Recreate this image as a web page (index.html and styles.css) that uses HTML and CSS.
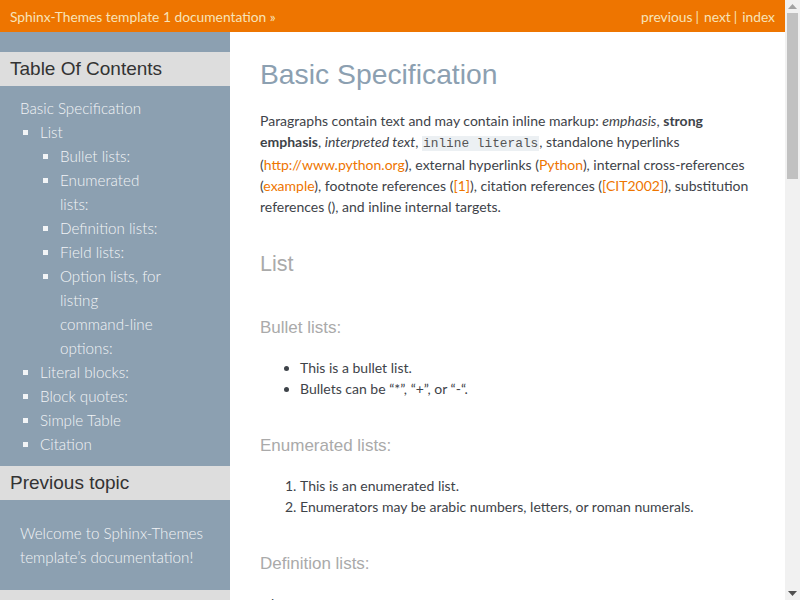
FILE: index.html
```html
<!DOCTYPE html>
<html>
<head>
<meta charset="utf-8">
<title>Basic Specification</title>
<link rel="stylesheet" href="styles.css">
</head>
<body>
<div class="viewport">
<div class="page">
<div class="topbar">
  <a class="brand" href="#">Sphinx-Themes template 1 documentation</a><span class="raquo"> »</span>
  <nav class="rel">
    <a href="#">previous</a><span class="sep">|</span>
    <a href="#">next</a><span class="sep">|</span>
    <a href="#">index</a>
  </nav>
</div>
<div class="layout">
  <aside class="sidebar">
    <h3 class="side-title">Table Of Contents</h3>
    <div class="side-body">
      <a class="toc-root" href="#">Basic Specification</a>
      <ul class="toc">
        <li><a href="#">List</a>
          <ul class="toc">
            <li><a href="#">Bullet lists:</a></li>
            <li><a href="#">Enumerated lists:</a></li>
            <li><a href="#">Definition lists:</a></li>
            <li><a href="#">Field lists:</a></li>
            <li><a href="#">Option lists, for listing command-line options:</a></li>
          </ul>
        </li>
        <li><a href="#">Literal blocks:</a></li>
        <li><a href="#">Block quotes:</a></li>
        <li><a href="#">Simple Table</a></li>
        <li><a href="#">Citation</a></li>
      </ul>
    </div>
    <h3 class="side-title">Previous topic</h3>
    <p class="side-text"><a href="#">Welcome to Sphinx-Themes template’s documentation!</a></p>
    <h3 class="side-title">Next topic</h3>
    <p class="side-text"><a href="#">Another page</a></p>
    <h3 class="side-title">This Page</h3>
    <ul class="toc side-list"><li><a href="#">Show Source</a></li></ul>
  </aside>
  <main class="main">
    <h1>Basic Specification</h1>
    <p>Paragraphs contain text and may contain inline markup: <em>emphasis</em>, <strong>strong emphasis</strong>, <em>interpreted text</em>, <code>inline literals</code>, standalone hyperlinks (<a href="#">http://www.python.org</a>), external hyperlinks (<a href="#">Python</a>), internal cross-references (<a href="#">example</a>), footnote references (<a href="#">[1]</a>), citation references (<a href="#">[CIT2002]</a>), substitution references (), and inline internal targets.</p>

    <h2>List</h2>
    <h3>Bullet lists:</h3>
    <ul class="bullets">
      <li>This is a bullet list.</li>
      <li>Bullets can be “*”, “+”, or “-“.</li>
    </ul>
    <h3>Enumerated lists:</h3>
    <ol class="numbers">
      <li>This is an enumerated list.</li>
      <li>Enumerators may be arabic numbers, letters, or roman numerals.</li>
    </ol>
    <h3>Definition lists:</h3>
    <dl>
      <dt>what</dt>
      <dd>Definition lists associate a term with a definition.</dd>
      <dt>how</dt>
      <dd>The term is a one-line phrase, and the definition is one or more paragraphs or body elements, indented relative to the term.</dd>
    </dl>
    <h3>Field lists:</h3>
    <dl>
      <dt>what</dt>
      <dd>Field lists map field names to field bodies, like database records.</dd>
      <dt>how</dt>
      <dd>The field marker is a colon, the field name, and a colon.</dd>
    </dl>
    <h3>Option lists, for listing command-line options:</h3>
    <dl>
      <dt><code>-a</code></dt><dd>command-line option “a”</dd>
      <dt><code>-b file</code></dt><dd>options can have arguments and long descriptions</dd>
      <dt><code>--long</code></dt><dd>options can be long also</dd>
      <dt><code>--input=file</code></dt><dd>long options can also have arguments</dd>
    </dl>
    <h2>Literal blocks:</h2>
    <p>Literal blocks are indented, and indicated with a double-colon ::</p>
    <pre>for a in [5,4,3,2,1]:   # this is program code, shown as-is
    print a
print "it's..."
# a literal block continues until the indentation ends</pre>
    <h2>Block quotes:</h2>
    <blockquote>Block quotes consist of indented body elements: This theory, that is mine, is mine.</blockquote>
    <h2>Simple Table</h2>
    <p>A simple table with headers, rows and a caption.</p>
    <h2>Citation</h2>
    <p>[CIT2002] A citation (as often used in journals).</p>
    <p>[1] A footnote contains body elements, consistently indented by at least 3 spaces.</p>
  </main>
</div>
</div>
<div class="scrollbar" aria-hidden="true">
  <div class="sb-btn"><svg width="9" height="5" viewBox="0 0 9 5"><path d="M0 5 L4.5 0 L9 5 Z" fill="#a3a3a3"/></svg></div>
  <div class="sb-track"><div class="sb-thumb"></div></div>
  <div class="sb-btn"><svg width="9" height="5" viewBox="0 0 9 5"><path d="M0 0 L9 0 L4.5 5 Z" fill="#505050"/></svg></div>
</div>
</div>
</body>
</html>
```
FILE: styles.css
```css
html, body {
  margin: 0;
  padding: 0;
}
body {
  font-family: Lato, "Open Sans", sans-serif;
  color: #3e4349;
  background: #fff;
}
a { text-decoration: none; }

.viewport {
  display: flex;
  height: 100vh;
  overflow: hidden;
}
.page {
  flex: 1;
  min-width: 0;
  overflow-y: auto;
  scrollbar-width: none;
}
.page::-webkit-scrollbar { display: none; }

.scrollbar {
  width: 15px;
  flex: none;
  background: #f1f1f1;
  display: flex;
  flex-direction: column;
}
.sb-btn {
  height: 13px;
  display: flex;
  align-items: center;
  justify-content: center;
}
.sb-track { flex: 1; }
.sb-thumb {
  height: 166px;
  margin: 0 2px;
  background: #c1c1c1;
}

.topbar {
  display: flex;
  align-items: center;
  height: 32px;
  background: #ee7500;
  padding: 0 10px;
  font-size: 13.8px;
  color: #f7e3b8;
}
.topbar a { color: #f7e3b8; }
.raquo { white-space: pre; }
.rel { margin-left: auto; display: flex; align-items: center; }
.sep { margin: 0 5px 0 3px; }

.layout { display: flex; align-items: stretch; }

.sidebar {
  width: 230px;
  flex: none;
  background: #8ca0b1;
  padding-top: 20px;
  padding-bottom: 40px;
  color: #f2f4f6;
  font-size: 15.2px;
  font-weight: 300;
  line-height: 24px;
}
.sidebar a { color: #f2f4f6; }
.side-title {
  margin: 0;
  background: #dddddd;
  color: #333;
  font-family: "Liberation Sans", Arial, sans-serif;
  font-weight: normal;
  font-size: 19px;
  height: 34px;
  line-height: 34px;
  padding-left: 10px;
}
.side-body {
  padding: 10px 0 10px 20px;
  width: 148px;
}
.toc {
  list-style: square;
  margin: 0;
  padding-left: 20px;
}
.toc-root { display: block; }
.side-text {
  margin: 0;
  padding: 21px 14px 21px 20px;
}
.side-list { padding: 10px 0 10px 40px; }

.main {
  flex: 1;
  padding: 24px 30px 40px 30px;
  min-width: 0;
  font-size: 14px;
  line-height: 21px;
}
.main h1 {
  font-family: "Liberation Sans", Arial, sans-serif;
  font-weight: normal;
  color: #8ca0b1;
  font-size: 28.3px;
  line-height: 36px;
  margin: 0 0 18px 0;
}
.main h2 {
  font-family: "Liberation Sans", Arial, sans-serif;
  font-weight: normal;
  color: #aaaaaa;
  font-size: 21.5px;
  line-height: 28px;
  margin: 33px 0 39px 0;
}
.main h3 {
  font-family: "Liberation Sans", Arial, sans-serif;
  font-weight: normal;
  color: #aaaaaa;
  font-size: 17px;
  line-height: 22px;
  margin: 36px 0 18px 0;
}
.main h2 + h3 { margin-top: 0; }
.main p { margin: 0 0 14px 0; }
.main a { color: #ee7500; }
.main code {
  font-family: "Liberation Mono", "DejaVu Sans Mono", monospace;
  font-size: 12.8px;
  background: #ecf0f3;
  color: #555;
  padding: 0 1px;
}
.bullets, .numbers {
  margin: 0;
  padding-left: 40px;
}
dl { margin: 0; }
dd { margin: 0 0 8px 30px; }
pre {
  font-family: "Liberation Mono", "DejaVu Sans Mono", monospace;
  font-size: 12.8px;
  background: #ecf0f3;
  padding: 10px;
  line-height: 18px;
}
blockquote { margin: 0 0 0 30px; }
```
